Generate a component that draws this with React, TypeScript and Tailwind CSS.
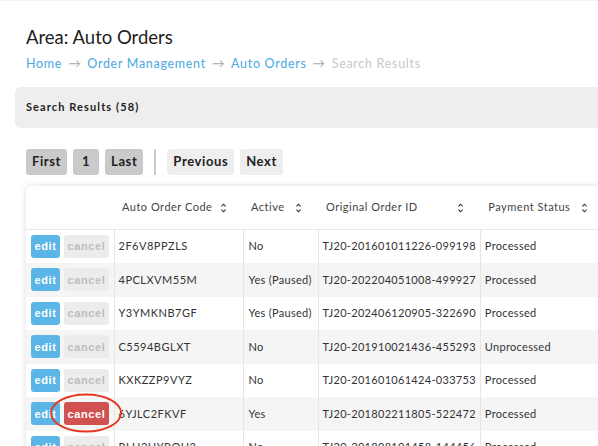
import React from "react";

type Row = {
  code: string;
  active: string;
  orderId: string;
  payment: string;
  danger?: boolean;
};

const rows: Row[] = [
  { code: "2F6V8PPZLS", active: "No", orderId: "TJ20-201601011226-099198", payment: "Processed" },
  { code: "4PCLXVM55M", active: "Yes (Paused)", orderId: "TJ20-202204051008-499927", payment: "Processed" },
  { code: "Y3YMKNB7GF", active: "Yes (Paused)", orderId: "TJ20-202406120905-322690", payment: "Processed" },
  { code: "C5594BGLXT", active: "No", orderId: "TJ20-201910021436-455293", payment: "Unprocessed" },
  { code: "KXKZZP9VYZ", active: "No", orderId: "TJ20-201601061424-033753", payment: "Processed" },
  { code: "6YJLC2FKVF", active: "Yes", orderId: "TJ20-201802211805-522472", payment: "Processed", danger: true },
  { code: "RLH2HYRQH3", active: "No", orderId: "TJ20-201808101458-144456", payment: "Processed" },
];

const SortIcon = () => (
  <svg width="7" height="12" viewBox="0 0 7 12" className="shrink-0">
    <path d="M1.4 4.3 L3.5 2.2 L5.6 4.3" fill="none" stroke="#333" strokeWidth="1.1" />
    <path d="M1.4 7.7 L3.5 9.8 L5.6 7.7" fill="none" stroke="#333" strokeWidth="1.1" />
  </svg>
);

const Head = ({ label, width }: { label: string; width: number }) => (
  <th style={{ width }} className="p-0 font-normal text-left">
    <div className="flex items-center justify-between pl-[8px] pr-[16px] h-[43px]">
      <span className="whitespace-nowrap">{label}</span>
      <SortIcon />
    </div>
  </th>
);

export default function App() {
  return (
    <div
      className="relative w-[598px] h-[446px] overflow-hidden bg-white border-t border-[#f2f2f2]"
      style={{ fontFamily: "Lato, 'Open Sans', sans-serif" }}
    >
      <div className="pl-[26px] pt-[25px]">
        <h1 className="text-[18.5px] leading-[23px] text-[#222]">Area: Auto Orders</h1>
        <div className="flex items-center gap-[6px] mt-[7px] text-[12.5px] leading-[16px] tracking-[0.7px]">
          <span className="text-[#4aa8e2]">Home</span>
          <span className="text-[#aaa]">→</span>
          <span className="text-[#4aa8e2]">Order Management</span>
          <span className="text-[#aaa]">→</span>
          <span className="text-[#4aa8e2]">Auto Orders</span>
          <span className="text-[#aaa]">→</span>
          <span className="text-[#c8c8c8]">Search Results</span>
        </div>
      </div>

      <div className="ml-[15px] mt-[15px] w-[600px] h-[41px] bg-[#eeeeee] rounded-l-[6px] flex items-center pl-[11px]">
        <span className="text-[11px] font-bold tracking-[1.1px] text-[#222]">Search Results (58)</span>
      </div>

      <div className="flex items-center ml-[26px] mt-[21px] gap-[6px] text-[13px] font-bold tracking-[0.6px] text-[#222]">
        <span className="h-[26px] px-[6px] flex items-center rounded-[3px] bg-[#cacaca]">First</span>
        <span className="h-[26px] w-[26px] flex items-center justify-center rounded-[3px] bg-[#cacaca]">1</span>
        <span className="h-[26px] px-[6px] flex items-center rounded-[3px] bg-[#cacaca]">Last</span>
        <span className="w-[2px] h-[26px] bg-[#cccccc] mx-[5px]" />
        <span className="h-[26px] px-[6px] flex items-center rounded-[3px] bg-[#eeeeee]">Previous</span>
        <span className="h-[26px] px-[6px] flex items-center rounded-[3px] bg-[#eeeeee]">Next</span>
      </div>

      <div className="ml-[26px] mt-[11px] w-[600px] bg-white rounded-tl-[6px] shadow-[0_0_6px_rgba(0,0,0,0.14)]">
        <table className="border-collapse table-fixed text-[11px] tracking-[0.3px]">
          <thead>
            <tr className="text-[#444] border-b border-[#e8e8e8] tracking-[0.5px]">
              <th style={{ width: 88 }} className="p-0" />
              <Head label="Auto Order Code" width={129} />
              <Head label="Active" width={75} />
              <Head label="Original Order ID" width={162} />
              <Head label="Payment Status" width={124} />
            </tr>
          </thead>
          <tbody className="text-[#333]">
            {rows.map((r, i) => (
              <tr key={r.code} className={i % 2 === 1 ? "bg-[#f5f5f5] h-[33.5px]" : "bg-white h-[33.5px]"}>
                <td className="p-0 pl-[5px]">
                  <div className="flex gap-[4px] tracking-[0.6px] font-bold text-[11px]" style={{ fontFamily: "'Liberation Sans', Arial, sans-serif" }}>
                    <span className="h-[23px] w-[29px] flex items-center justify-center rounded-[3px] bg-[#5bb5e6] text-white">edit</span>
                    <span
                      className={
                        r.danger
                          ? "h-[23px] w-[45px] flex items-center justify-center rounded-[3px] bg-[#cf5250] text-white"
                          : "h-[23px] w-[45px] flex items-center justify-center rounded-[3px] bg-[#ececec] text-[#bdbdbd]"
                      }
                    >
                      cancel
                    </span>
                  </div>
                </td>
                <td className="px-[4px] border-l border-[#e6e6e6] whitespace-nowrap tracking-[0.5px]">{r.code}</td>
                <td className="px-[5px] border-l border-[#e6e6e6] whitespace-nowrap">{r.active}</td>
                <td className="px-[4px] border-l border-[#e6e6e6] whitespace-nowrap">{r.orderId}</td>
                <td className="px-[4px] border-l border-[#e6e6e6] whitespace-nowrap">{r.payment}</td>
              </tr>
            ))}
          </tbody>
        </table>
      </div>

      <svg className="absolute left-[48px] top-[390px]" width="76" height="44" viewBox="0 0 76 44">
        <ellipse cx="38" cy="22" rx="35" ry="18.5" fill="none" stroke="#e5371f" strokeWidth="1.8" />
      </svg>
    </div>
  );
}
